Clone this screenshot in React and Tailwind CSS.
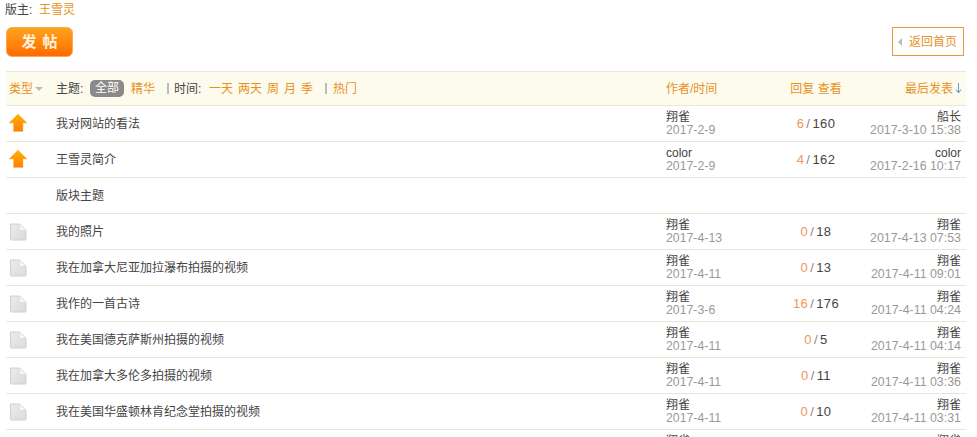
const font = "[font-family:'Liberation_Sans','Noto_Sans_CJK_SC',sans-serif]";

const topics = [
  { icon: "pin", title: "我对网站的看法", author: "翔雀", date: "2017-2-9", replies: 6, views: 160, last: "船长", lastDate: "2017-3-10 15:38" },
  { icon: "pin", title: "王雪灵简介", author: "color", date: "2017-2-9", replies: 4, views: 162, last: "color", lastDate: "2017-2-16 10:17" },
  { title: "版块主题" },
  { icon: "doc", title: "我的照片", author: "翔雀", date: "2017-4-13", replies: 0, views: 18, last: "翔雀", lastDate: "2017-4-13 07:53" },
  { icon: "doc", title: "我在加拿大尼亚加拉瀑布拍摄的视频", author: "翔雀", date: "2017-4-11", replies: 0, views: 13, last: "翔雀", lastDate: "2017-4-11 09:01" },
  { icon: "doc", title: "我作的一首古诗", author: "翔雀", date: "2017-3-6", replies: 16, views: 176, last: "翔雀", lastDate: "2017-4-11 04:24" },
  { icon: "doc", title: "我在美国德克萨斯州拍摄的视频", author: "翔雀", date: "2017-4-11", replies: 0, views: 5, last: "翔雀", lastDate: "2017-4-11 04:14" },
  { icon: "doc", title: "我在加拿大多伦多拍摄的视频", author: "翔雀", date: "2017-4-11", replies: 0, views: 11, last: "翔雀", lastDate: "2017-4-11 03:36" },
  { icon: "doc", title: "我在美国华盛顿林肯纪念堂拍摄的视频", author: "翔雀", date: "2017-4-11", replies: 0, views: 10, last: "翔雀", lastDate: "2017-4-11 03:31" },
  { icon: "doc", title: "", author: "翔雀", date: "2017-4-11", replies: 0, views: 9, last: "翔雀", lastDate: "2017-4-11 03:20" },
];

function PinIcon() {
  return (
    <svg width="20" height="20" viewBox="0 0 20 20">
      <defs>
        <linearGradient id="pin" x1="0" y1="0" x2="0" y2="1">
          <stop offset="0" stopColor="#ffb400" />
          <stop offset="1" stopColor="#fe7d0a" />
        </linearGradient>
      </defs>
      <path d="M10 1 L19 10 L15 10 L15 18.5 L5.5 18.5 L5.5 10 L1 10 Z" fill="url(#pin)" stroke="#ffb84a" strokeWidth="0.5" strokeLinejoin="round" />
    </svg>
  );
}

function DocIcon() {
  return (
    <svg width="18" height="18" viewBox="0 0 18 18">
      <defs>
        <linearGradient id="doc" x1="0" y1="0" x2="1" y2="1">
          <stop offset="0" stopColor="#ececec" />
          <stop offset="1" stopColor="#dadada" />
        </linearGradient>
      </defs>
      <path d="M1.5 1 L10.5 1 L17 7.5 L17 16 Q17 17 16 17 L2.5 17 Q1.5 17 1.5 16 Z" fill="url(#doc)" stroke="#d0d0d0" />
      <path d="M10.5 1 L10.5 7.5 L17 7.5 Z" fill="#f8f8f8" stroke="#d8d8d8" strokeWidth="0.7" />
    </svg>
  );
}

function SortArrow() {
  return (
    <svg width="7" height="11" viewBox="0 0 7 11" className="ml-[2px]">
      <path d="M3.5 0 V9 M1 6.5 L3.5 10 L6 6.5" fill="none" stroke="#5b9bd5" strokeWidth="1" />
    </svg>
  );
}

function TopicRow({ topic }) {
  return (
    <div className="flex h-[36px] items-center border-b border-[#e8e6d2]">
      <div className="flex w-[50px] shrink-0 pl-[2px] pb-[1px]">
        {topic.icon === "pin" && <PinIcon />}
        {topic.icon === "doc" && <span className="pl-[1px] pt-[1px]"><DocIcon /></span>}
      </div>
      <div className="flex-1 text-[12px] text-[#444]">{topic.title}</div>
      {topic.author && (
        <>
          <div className="w-[100px] shrink-0 leading-[13px]">
            <div className="text-[12px] text-[#444]">{topic.author}</div>
            <div className="text-[12.3px] text-[#999]">{topic.date}</div>
          </div>
          <div className="w-[100px] shrink-0 text-center text-[13px] tracking-[0.4px] text-[#444]">
            <span className="text-[#f0965a]">{topic.replies}</span>
            <span className="mx-[2px] text-[#888]">/</span>
            {topic.views}
          </div>
          <div className="w-[100px] shrink-0 whitespace-nowrap pr-[5px] text-right leading-[13px]">
            <div className="text-[12px] text-[#444]">{topic.last}</div>
            <div className="-ml-[10px] text-[12.4px] text-[#999]">{topic.lastDate}</div>
          </div>
        </>
      )}
    </div>
  );
}

export default function App() {
  return (
    <div className={`h-[437px] overflow-hidden bg-white pl-[6px] pr-[11px] text-[12px] text-[#444] ${font}`}>
      <div className="flex pt-[1px] leading-[18px]">
        <span className="-ml-[1px] w-[34px]">版主:</span>
        <span className="text-[#e8911d]">王雪灵</span>
      </div>
      <div className="mt-[8px] flex h-[44px] items-start justify-between">
        <button className="h-[30px] w-[67px] rounded-[6px] border border-[#f9a85c] bg-gradient-to-b from-[#ffa31a] to-[#ff6a00] pl-[6px] text-[15px] font-bold tracking-[6px] text-[#fff3e0]">
          发帖
        </button>
        <div className="mr-[2px] flex h-[29px] w-[72px] items-center gap-[7px] border border-[#e39a3c] pl-[5px] text-[#e8911d]">
          <span className="h-0 w-0 border-y-[4px] border-r-[4px] border-y-transparent border-r-[#bbb]" />
          返回首页
        </div>
      </div>
      <div className="flex h-[35px] items-center border-y border-[#ece8d2] bg-[#fdfbee] text-[#e8911d]">
        <div className="flex w-[50px] shrink-0 items-center pl-[3px]">
          类型
          <span className="ml-[2px] mt-[1px] h-0 w-0 border-x-[4px] border-t-[4px] border-x-transparent border-t-[#bbb]" />
        </div>
        <div className="flex flex-1 items-center">
          <span className="w-[34px] text-[#444]">主题:</span>
          <span className="rounded-[5px] bg-[#8a8a8a] px-[5px] leading-[17px] text-white">全部</span>
          <span className="ml-[7px]">精华</span>
          <span className="ml-[12px] h-[11px] w-[2px] bg-[#bbb]" />
          <span className="ml-[5px] w-[35px] text-[#444]">时间:</span>
          <span>一天</span>
          <span className="ml-[5px]">两天</span>
          <span className="ml-[5px]">周</span>
          <span className="ml-[5px]">月</span>
          <span className="ml-[5px]">季</span>
          <span className="ml-[12px] h-[11px] w-[2px] bg-[#bbb]" />
          <span className="ml-[6px]">热门</span>
        </div>
        <div className="w-[100px] shrink-0">作者/时间</div>
        <div className="w-[100px] shrink-0 text-center">回复 查看</div>
        <div className="flex w-[100px] shrink-0 items-center justify-end pr-[4px]">
          最后发表
          <SortArrow />
        </div>
      </div>
      {topics.map((topic, i) => (
        <TopicRow key={i} topic={topic} />
      ))}
    </div>
  );
}
